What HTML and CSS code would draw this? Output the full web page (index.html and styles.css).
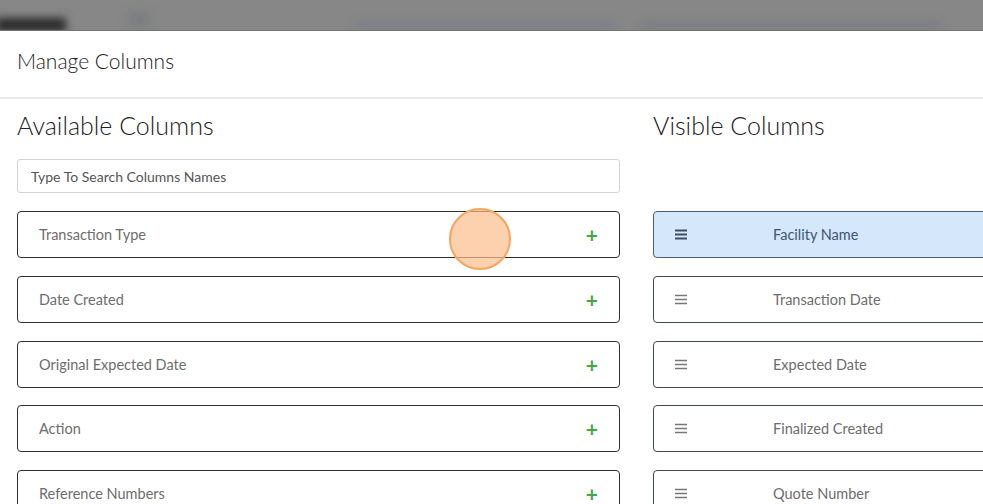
FILE: index.html
```html
<!DOCTYPE html>
<html>

<head>
    <title>Manage Columns</title>
    <link rel="stylesheet" href="styles.css">
</head>

<body>
    <div class="backdrop">
        <div class="blur blur-logo"></div>
        <div class="blur blur-icon"></div>
        <div class="blur blur-links"></div>
        <div class="blur blur-links2"></div>
    </div>

    <div class="modal">
        <div class="modal-header">
            <h1>Manage Columns</h1>
        </div>

        <div class="modal-body">
            <div class="panel">
                <h2>Available Columns</h2>
                <input class="search" type="text" placeholder="Type To Search Columns Names">
                <div class="list">
                    <div class="row"><span>Transaction Type</span><span class="add">+</span></div>
                    <div class="row"><span>Date Created</span><span class="add">+</span></div>
                    <div class="row"><span>Original Expected Date</span><span class="add">+</span></div>
                    <div class="row"><span>Action</span><span class="add">+</span></div>
                    <div class="row"><span>Reference Numbers</span><span class="add">+</span></div>
                </div>
            </div>

            <div class="panel">
                <h2>Visible Columns</h2>
                <div class="list visible">
                    <div class="row selected">
                        <span class="handle"><svg width="13" height="11" viewBox="0 0 13 11"><path d="M0 1.5H12M0 5.5H12M0 9.5H12" stroke="currentColor" stroke-width="2"/></svg></span>
                        <span>Facility Name</span>
                    </div>
                    <div class="row">
                        <span class="handle"><svg width="13" height="11" viewBox="0 0 13 11"><path d="M0 1.5H12M0 5.5H12M0 9.5H12" stroke="currentColor" stroke-width="1.4"/></svg></span>
                        <span>Transaction Date</span>
                    </div>
                    <div class="row">
                        <span class="handle"><svg width="13" height="11" viewBox="0 0 13 11"><path d="M0 1.5H12M0 5.5H12M0 9.5H12" stroke="currentColor" stroke-width="1.4"/></svg></span>
                        <span>Expected Date</span>
                    </div>
                    <div class="row">
                        <span class="handle"><svg width="13" height="11" viewBox="0 0 13 11"><path d="M0 1.5H12M0 5.5H12M0 9.5H12" stroke="currentColor" stroke-width="1.4"/></svg></span>
                        <span>Finalized Created</span>
                    </div>
                    <div class="row">
                        <span class="handle"><svg width="13" height="11" viewBox="0 0 13 11"><path d="M0 1.5H12M0 5.5H12M0 9.5H12" stroke="currentColor" stroke-width="1.4"/></svg></span>
                        <span>Quote Number</span>
                    </div>
                </div>
            </div>
        </div>

        <div class="click-marker"></div>
    </div>
</body>

</html>
```

FILE: styles.css
```css
body {
    margin: 0;
    background-color: #878787;
    font-family: Lato, "Noto Sans", sans-serif;
    overflow: hidden;
    height: 504px;
}

.backdrop {
    height: 30px;
    position: relative;
    overflow: hidden;
    border-bottom: 1px solid #747474;
}

.blur {
    position: absolute;
    filter: blur(4px);
}

.blur-logo {
    left: -4px;
    top: 18px;
    width: 70px;
    height: 14px;
    background-color: #2a2a2a;
}

.blur-icon {
    left: 128px;
    top: 12px;
    width: 22px;
    height: 16px;
    background-color: #7b7f82;
}

.blur-links {
    left: 355px;
    top: 23px;
    width: 260px;
    height: 5px;
    background-color: #767a88;
}

.blur-links2 {
    left: 640px;
    top: 23px;
    width: 300px;
    height: 5px;
    background-color: #75777f;
}

.modal {
    position: relative;
    background-color: #fff;
    width: 1300px;
    height: 480px;
}

.modal-header {
    height: 59px;
    display: flex;
    align-items: center;
    padding: 0 17px 7px;
    margin-bottom: -1px;
    border-bottom: 2px solid #e9e9e9;
}

.modal-header h1 {
    margin: 0;
    font-size: 21px;
    font-weight: 300;
    color: #222;
}

.modal-body {
    display: grid;
    grid-template-columns: 603px 603px;
    column-gap: 33px;
    padding: 0 17px;
}

.panel h2 {
    margin: 12px 0 19px;
    font-size: 25px;
    line-height: 30px;
    font-weight: 300;
    color: #222;
}

.search {
    display: block;
    box-sizing: border-box;
    width: 100%;
    height: 34px;
    padding: 0 13px;
    border: 1px solid #d3d3d3;
    border-radius: 3px;
    font-family: inherit;
    font-size: 14px;
    margin-bottom: 18px;
}

.search::placeholder {
    color: #555;
}

.list {
    display: flex;
    flex-direction: column;
    gap: 17.75px;
}

.list.visible {
    margin-top: 71px;
}

.row {
    box-sizing: border-box;
    height: 47px;
    display: flex;
    align-items: center;
    justify-content: space-between;
    padding: 0 21px;
    border: 1px solid #2f2f2f;
    border-radius: 4px;
    font-size: 14.5px;
    color: #6d6d6d;
}

.add {
    color: #43a846;
    font-size: 21px;
    font-weight: 700;
}

.visible .row {
    justify-content: flex-start;
    border-color: #3d4a52;
}

.handle {
    width: 98px;
    display: flex;
    color: #777;
}

.row.selected {
    background-color: #d5e7fb;
    border-color: #4a5f73;
    color: #3d5673;
}

.row.selected .handle {
    color: #3c4f63;
}

.click-marker {
    position: absolute;
    left: 449px;
    top: 177px;
    width: 58px;
    height: 58px;
    border-radius: 50%;
    background-color: rgba(252, 190, 140, 0.7);
    border: 2px solid #f6a45e;
}
```
